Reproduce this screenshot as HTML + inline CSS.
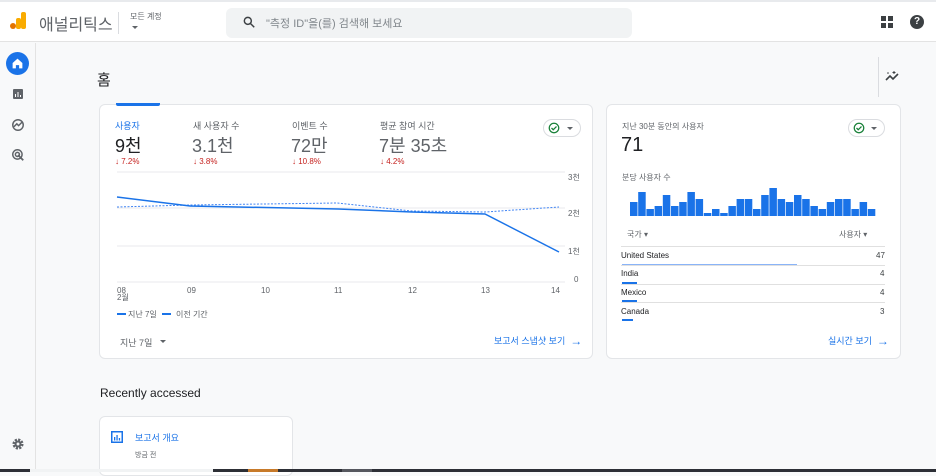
<!DOCTYPE html>
<html><head><meta charset="utf-8"><style>
*{margin:0;padding:0;box-sizing:border-box}
body{width:936px;height:472px;overflow:hidden;background:#f8f9fa;font-family:"Liberation Sans","Noto Sans CJK KR",sans-serif;color:#3c4043;position:relative}
.a{position:absolute;white-space:nowrap}
.card{position:absolute;background:#fff;border:1px solid #e3e5e8;border-radius:6px}
.red{color:#c5221f;font-size:8px}
.arr{font-size:12px;vertical-align:-1px}
</style></head><body>
<div class="a" style="left:0;top:0;width:936px;height:2px;background:#e8eaed"></div>
<div class="a" style="left:0;top:2px;width:936px;height:40px;background:#fff;border-bottom:1px solid #e3e3e3"></div>
<div class="a" style="left:10px;top:23px;width:6px;height:6px;border-radius:3px;background:#e37400"></div>
<div class="a" style="left:16px;top:18px;width:5px;height:11px;border-radius:2px;background:#f9ab00"></div>
<div class="a" style="left:21px;top:12px;width:5px;height:17px;border-radius:2px;background:#f9ab00"></div>
<div class="a" style="left:39px;top:11px;font-size:16px;color:#5f6368">애널리틱스</div>
<div class="a" style="left:118px;top:12px;width:1px;height:22px;background:#dadce0"></div>
<div class="a" style="left:130px;top:11px;font-size:8px;color:#5f6368">모든 계정</div>
<div class="a" style="left:132px;top:26px;width:0;height:0;border-left:3px solid transparent;border-right:3px solid transparent;border-top:3px solid #5f6368"></div>
<div class="a" style="left:226px;top:8px;width:406px;height:30px;background:#f1f3f4;border-radius:6px"></div>
<svg class="a" style="left:242px;top:15px" width="14" height="14" viewBox="0 0 24 24"><circle cx="10" cy="10" r="6" fill="none" stroke="#3c4043" stroke-width="2.5"/><path d="M14.5 14.5L21 21" stroke="#3c4043" stroke-width="2.5"/></svg>
<div class="a" style="left:266px;top:15px;font-size:11px;color:#80868b">"측정 ID"을(를) 검색해 보세요</div>
<svg class="a" style="left:881px;top:16px" width="12" height="12"><rect x="0" y="0" width="5" height="5" fill="#3c4043"/><rect x="7" y="0" width="5" height="5" fill="#3c4043"/><rect x="0" y="7" width="5" height="5" fill="#3c4043"/><rect x="7" y="7" width="5" height="5" fill="#3c4043"/></svg>
<div class="a" style="left:910px;top:15px;width:14px;height:14px;border-radius:7px;background:#3c4043;color:#fff;font-size:10px;font-weight:bold;text-align:center;line-height:14px">?</div>
<div class="a" style="left:0;top:43px;width:36px;height:426px;background:#f8f9fa;border-right:1px solid #e3e3e3"></div>
<div class="a" style="left:6px;top:52px;width:23px;height:23px;border-radius:12px;background:#1a73e8"></div>
<svg class="a" style="left:11px;top:57px" width="13" height="13" viewBox="0 0 24 24"><path d="M12 3L3 11v10h6v-6h6v6h6V11z" fill="#fff"/></svg>
<svg class="a" style="left:12px;top:88px" width="12" height="12" viewBox="0 0 24 24"><rect x="2" y="2" width="20" height="20" rx="2" fill="#5f6368"/><rect x="6" y="12" width="2" height="6" fill="#fff"/><rect x="11" y="8" width="2" height="10" fill="#fff"/><rect x="16" y="14" width="2" height="4" fill="#fff"/></svg>
<svg class="a" style="left:11px;top:118px" width="14" height="14" viewBox="0 0 24 24"><circle cx="12" cy="12" r="9" fill="none" stroke="#5f6368" stroke-width="2.5"/><path d="M5 15l5-5 3 3 6-6" fill="none" stroke="#5f6368" stroke-width="2.5"/></svg>
<svg class="a" style="left:11px;top:148px" width="14" height="14" viewBox="0 0 24 24"><circle cx="11" cy="11" r="8" fill="none" stroke="#5f6368" stroke-width="2.5"/><circle cx="11" cy="11" r="3.5" fill="none" stroke="#5f6368" stroke-width="2.5"/><path d="M12 12l9 9" stroke="#5f6368" stroke-width="3"/></svg>
<svg class="a" style="left:11px;top:437px" width="14" height="14" viewBox="0 0 24 24"><circle cx="12" cy="12" r="7" fill="none" stroke="#5f6368" stroke-width="5" stroke-dasharray="3.5 2"/><circle cx="12" cy="12" r="6" fill="#5f6368"/><circle cx="12" cy="12" r="2.5" fill="#f8f9fa"/></svg>
<div class="a" style="left:97px;top:69px;font-size:15px;color:#202124">홈</div>
<div class="a" style="left:878px;top:57px;width:1px;height:40px;background:#dadce0"></div>
<svg class="a" style="left:885px;top:70px" width="15" height="12" viewBox="0 0 15 12"><path d="M1 10l4-4 3 3 5-5" fill="none" stroke="#3c4043" stroke-width="1.6"/><circle cx="3" cy="3" r="0.8" fill="#3c4043"/><path d="M9 1v3M7.5 2.5h3" stroke="#3c4043" stroke-width="1"/></svg>
<div class="card" style="left:99px;top:104px;width:494px;height:255px"></div>
<div class="a" style="left:116px;top:103px;width:44px;height:3px;background:#1a73e8;border-radius:0 0 2px 2px"></div>
<div class="a" style="left:115px;top:119px;font-size:9px;color:#1a73e8">사용자</div>
<div class="a" style="left:115px;top:132px;font-size:18px;color:#202124">9천</div>
<div class="a red" style="left:115px;top:157px">↓ 7.2%</div>
<div class="a" style="left:193px;top:119px;font-size:9px;color:#5f6368">새 사용자 수</div>
<div class="a" style="left:192px;top:132px;font-size:18px;color:#5f6368">3.1천</div>
<div class="a red" style="left:193px;top:157px">↓ 3.8%</div>
<div class="a" style="left:292px;top:119px;font-size:9px;color:#5f6368">이벤트 수</div>
<div class="a" style="left:291px;top:132px;font-size:18px;color:#5f6368">72만</div>
<div class="a red" style="left:292px;top:157px">↓ 10.8%</div>
<div class="a" style="left:380px;top:119px;font-size:9px;color:#5f6368">평균 참여 시간</div>
<div class="a" style="left:379px;top:132px;font-size:18px;color:#5f6368">7분 35초</div>
<div class="a red" style="left:380px;top:157px">↓ 4.2%</div>
<div class="a" style="left:543px;top:119px;width:38px;height:18px;border:1px solid #dadce0;border-radius:9px"></div>
<svg class="a" style="left:548px;top:122px" width="12" height="12" viewBox="0 0 24 24"><circle cx="12" cy="12" r="9.5" fill="none" stroke="#188038" stroke-width="2.5"/><path d="M7 12l3.5 3.5L17 9" fill="none" stroke="#188038" stroke-width="2.5"/></svg>
<div class="a" style="left:567px;top:127px;border-left:3px solid transparent;border-right:3px solid transparent;border-top:3px solid #5f6368"></div>
<svg class="a" style="left:100px;top:165px" width="490" height="140">
<g stroke="#e8eaed" stroke-width="1"><line x1="17" y1="7" x2="465" y2="7"/><line x1="17" y1="43" x2="465" y2="43"/><line x1="17" y1="81" x2="465" y2="81"/><line x1="17" y1="117" x2="465" y2="117"/></g>
<g font-size="8" fill="#5f6368" font-family="Liberation Sans,Noto Sans CJK KR,sans-serif"><text x="468" y="15">3천</text><text x="468" y="51">2천</text><text x="468" y="89">1천</text><text x="474" y="117">0</text>
<text x="17" y="128">08</text><text x="17" y="135">2월</text><text x="87" y="128">09</text><text x="161" y="128">10</text><text x="234" y="128">11</text><text x="308" y="128">12</text><text x="381" y="128">13</text><text x="451" y="128">14</text></g>
<polyline points="17,42 90,40 237,38 312,46 385,47 459,42" fill="none" stroke="#4285f4" stroke-width="1" stroke-dasharray="2 1.5"/>
<polyline points="17,32 90,41 238,44 312,47 385,49 459,87" fill="none" stroke="#1a73e8" stroke-width="1.5"/>
</svg>
<div class="a" style="left:117px;top:313px;width:9px;height:2px;background:#1a73e8"></div>
<div class="a" style="left:128px;top:309px;font-size:8px;color:#5f6368">지난 7일</div>
<div class="a" style="left:162px;top:313px;width:9px;height:2px;border-top:2px dashed #1a73e8"></div>
<div class="a" style="left:176px;top:309px;font-size:8px;color:#5f6368">이전 기간</div>
<div class="a" style="left:120px;top:336px;font-size:9px;color:#5f6368">지난 7일</div>
<div class="a" style="left:160px;top:340px;border-left:3px solid transparent;border-right:3px solid transparent;border-top:3px solid #5f6368"></div>
<div class="a" style="left:494px;top:334px;font-size:9px;color:#1a73e8">보고서 스냅샷 보기 &nbsp;<span class="arr">→</span></div>
<div class="card" style="left:606px;top:104px;width:295px;height:255px"></div>
<div class="a" style="left:622px;top:121px;font-size:8px;color:#5f6368">지난 30분 동안의 사용자</div>
<div class="a" style="left:621px;top:134px;font-size:20px;color:#202124">71</div>
<div class="a" style="left:848px;top:119px;width:37px;height:18px;border:1px solid #dadce0;border-radius:9px"></div>
<svg class="a" style="left:853px;top:122px" width="12" height="12" viewBox="0 0 24 24"><circle cx="12" cy="12" r="9.5" fill="none" stroke="#188038" stroke-width="2.5"/><path d="M7 12l3.5 3.5L17 9" fill="none" stroke="#188038" stroke-width="2.5"/></svg>
<div class="a" style="left:871px;top:127px;border-left:3px solid transparent;border-right:3px solid transparent;border-top:3px solid #5f6368"></div>
<div class="a" style="left:622px;top:172px;font-size:8px;color:#5f6368">분당 사용자 수</div>
<svg class="a" style="left:630px;top:185px" width="250" height="31">
<g fill="#1a73e8">
<rect x="0" y="17" width="7.5" height="14"/><rect x="8.2" y="7" width="7.5" height="24"/><rect x="16.4" y="24" width="7.5" height="7"/><rect x="24.6" y="21" width="7.5" height="10"/><rect x="32.8" y="10" width="7.5" height="21"/><rect x="41" y="21" width="7.5" height="10"/><rect x="49.2" y="17" width="7.5" height="14"/><rect x="57.4" y="7" width="7.5" height="24"/><rect x="65.6" y="14" width="7.5" height="17"/><rect x="73.8" y="28" width="7.5" height="3"/><rect x="82" y="24" width="7.5" height="7"/><rect x="90.2" y="28" width="7.5" height="3"/><rect x="98.4" y="21" width="7.5" height="10"/><rect x="106.6" y="14" width="7.5" height="17"/><rect x="114.8" y="14" width="7.5" height="17"/><rect x="123" y="24" width="7.5" height="7"/><rect x="131.2" y="10" width="7.5" height="21"/><rect x="139.4" y="3" width="7.5" height="28"/><rect x="147.6" y="14" width="7.5" height="17"/><rect x="155.8" y="17" width="7.5" height="14"/><rect x="164" y="10" width="7.5" height="21"/><rect x="172.2" y="14" width="7.5" height="17"/><rect x="180.4" y="21" width="7.5" height="10"/><rect x="188.6" y="24" width="7.5" height="7"/><rect x="196.8" y="17" width="7.5" height="14"/><rect x="205" y="14" width="7.5" height="17"/><rect x="213.2" y="14" width="7.5" height="17"/><rect x="221.4" y="24" width="7.5" height="7"/><rect x="229.6" y="17" width="7.5" height="14"/><rect x="237.8" y="24" width="7.5" height="7"/>
</g></svg>
<div class="a" style="left:627px;top:229px;font-size:8px;color:#5f6368">국가 ▾</div>
<div class="a" style="left:839px;top:229px;font-size:8px;color:#5f6368">사용자 ▾</div>
<div class="a" style="left:621px;top:246px;width:264px;height:1px;background:#e0e0e0"></div>
<div class="a" style="left:621px;top:251px;font-size:8px;color:#202124">United States</div><div class="a" style="left:876px;top:251px;font-size:8px">47</div>
<div class="a" style="left:622px;top:264px;width:175px;height:2px;background:#8ab4f8"></div>
<div class="a" style="left:621px;top:265px;width:264px;height:1px;background:#e0e0e0"></div>
<div class="a" style="left:621px;top:269px;font-size:8px;color:#202124">India</div><div class="a" style="left:880px;top:269px;font-size:8px">4</div>
<div class="a" style="left:622px;top:282px;width:15px;height:2px;background:#1a73e8"></div>
<div class="a" style="left:621px;top:284px;width:264px;height:1px;background:#e0e0e0"></div>
<div class="a" style="left:621px;top:288px;font-size:8px;color:#202124">Mexico</div><div class="a" style="left:880px;top:288px;font-size:8px">4</div>
<div class="a" style="left:622px;top:300px;width:15px;height:2px;background:#1a73e8"></div>
<div class="a" style="left:621px;top:302px;width:264px;height:1px;background:#e0e0e0"></div>
<div class="a" style="left:621px;top:307px;font-size:8px;color:#202124">Canada</div><div class="a" style="left:880px;top:307px;font-size:8px">3</div>
<div class="a" style="left:622px;top:319px;width:11px;height:2px;background:#1a73e8"></div>
<div class="a" style="left:828px;top:334px;font-size:9px;color:#1a73e8">실시간 보기 &nbsp;<span class="arr">→</span></div>
<div class="a" style="left:100px;top:386px;font-size:12px;color:#202124">Recently accessed</div>
<div class="card" style="left:99px;top:416px;width:194px;height:60px"></div>
<svg class="a" style="left:111px;top:431px" width="12" height="12" viewBox="0 0 12 12"><rect x="0.75" y="0.75" width="10.5" height="10.5" fill="none" stroke="#1a73e8" stroke-width="1.5"/><rect x="3" y="6" width="1.3" height="3.5" fill="#1a73e8"/><rect x="5.4" y="4" width="1.3" height="5.5" fill="#1a73e8"/><rect x="7.8" y="7" width="1.3" height="2.5" fill="#1a73e8"/></svg>
<div class="a" style="left:135px;top:431px;font-size:9px;color:#1a73e8">보고서 개요</div>
<div class="a" style="left:135px;top:450px;font-size:7px;color:#5f6368">방금 전</div>
<div class="a" style="left:0;top:469px;width:936px;height:3px;background:#2d2f36"></div>
<div class="a" style="left:30px;top:469px;width:183px;height:3px;background:#f1f3f4"></div>
<div class="a" style="left:248px;top:469px;width:30px;height:3px;background:#c77a2a"></div>
<div class="a" style="left:342px;top:469px;width:30px;height:3px;background:#55575e"></div>
</body></html>
